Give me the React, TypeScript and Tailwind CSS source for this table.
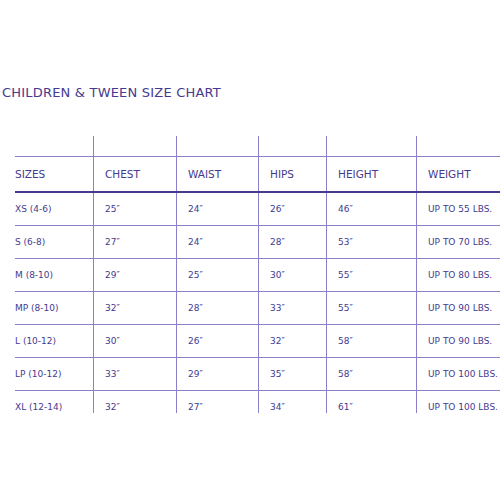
const head = ['SIZES', 'CHEST', 'WAIST', 'HIPS', 'HEIGHT', 'WEIGHT'];

const rows = [
  ['XS (4-6)', '25″', '24″', '26″', '46″', 'UP TO 55 LBS.'],
  ['S (6-8)', '27″', '24″', '28″', '53″', 'UP TO 70 LBS.'],
  ['M (8-10)', '29″', '25″', '30″', '55″', 'UP TO 80 LBS.'],
  ['MP (8-10)', '32″', '28″', '33″', '55″', 'UP TO 90 LBS.'],
  ['L (10-12)', '30″', '26″', '32″', '58″', 'UP TO 90 LBS.'],
  ['LP (10-12)', '33″', '29″', '35″', '58″', 'UP TO 100 LBS.'],
  ['XL (12-14)', '32″', '27″', '34″', '61″', 'UP TO 100 LBS.'],
];

const grid = 'grid grid-cols-[78px_83px_82px_68px_90px_1fr]';

function Cell({ i, children, cls }: { i: number; children?: React.ReactNode; cls: string }) {
  return (
    <div className={`${cls} flex items-center ${i === 0 ? '' : 'border-l border-[#8a80c8] pl-[11px]'}`}>
      {children}
    </div>
  );
}

export default function App() {
  return (
    <div className="w-[500px] h-[500px] bg-white overflow-hidden text-[#453a8f] font-['DejaVu_Sans',sans-serif]">
      <div className="pt-[85px] pl-[2px] text-[13px] leading-[16px] tracking-[0.2px]">
        CHILDREN &amp; TWEEN SIZE CHART
      </div>

      <div className="pt-[35px] pl-[15px]">
        <div className={grid}>
          {head.map((_, i) => (
            <Cell key={i} i={i} cls="h-[20px]" />
          ))}
        </div>
        <div className={`${grid} border-t border-[#8a80c8] border-b-2 border-b-[#453a8f]`}>
          {head.map((h, i) => (
            <Cell key={h} i={i} cls="h-[34px] text-[10.5px] pt-[1px]">
              {h}
            </Cell>
          ))}
        </div>
        {rows.map((r, ri) => {
          const last = ri === rows.length - 1;
          return (
            <div
              key={ri}
              className={`${grid} ${last ? 'h-[22px] overflow-hidden' : 'border-b border-[#8a80c8]'}`}
            >
              {r.map((c, i) => (
                <Cell key={i} i={i} cls="h-[32px] text-[9px] pt-[1px]">
                  {c}
                </Cell>
              ))}
            </div>
          );
        })}
      </div>
    </div>
  );
}
